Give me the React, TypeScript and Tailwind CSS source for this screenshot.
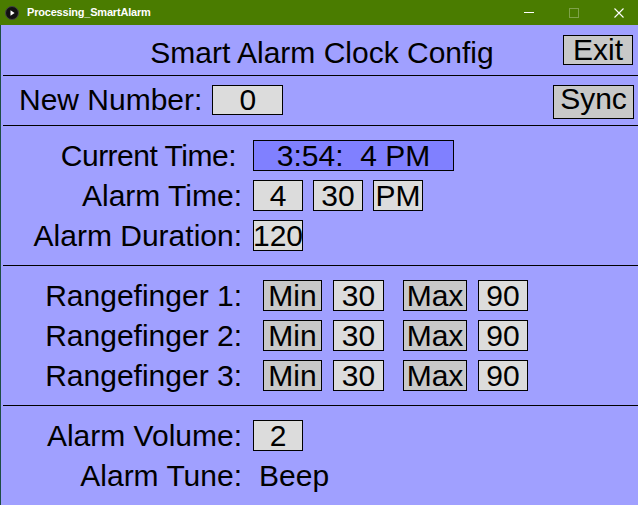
import type { ReactNode } from 'react'

function Cell({ className = '', children }: { className?: string; children: ReactNode }) {
  return (
    <div className={'flex h-[31px] items-center justify-center border border-black leading-none ' + className}>
      {children}
    </div>
  )
}

function Label({ children }: { children: ReactNode }) {
  return <div className="w-[241px] shrink-0 text-right leading-none">{children}</div>
}

function Rule() {
  return <div className="ml-[2px] h-px shrink-0 bg-black" />
}

function Rangefinger({ n }: { n: number }) {
  return (
    <div className="flex h-[31px] items-center">
      <Label>Rangefinger {n}:</Label>
      <Cell className="ml-[21px] w-[59px] bg-[#c8c8c8]">Min</Cell>
      <Cell className="ml-[11px] w-[51px] bg-[#dcdcdc]">30</Cell>
      <Cell className="ml-[19px] w-[64px] bg-[#c8c8c8]">Max</Cell>
      <Cell className="ml-[11px] w-[50px] bg-[#dcdcdc]">90</Cell>
    </div>
  )
}

export default function App() {
  return (
    <div className="flex h-[505px] w-[638px] flex-col overflow-hidden bg-[#a0a0ff] font-['Liberation_Sans',Arial,sans-serif] text-[30px] text-black">
      {/* window title bar */}
      <div className="flex h-[25px] shrink-0 items-center bg-[#4a7c00] text-white">
        <svg width="14" height="14" viewBox="0 0 14 14" className="ml-[5px]">
          <circle cx="7" cy="7" r="6.5" fill="#111" stroke="#444" strokeWidth="1" />
          <path d="M5.5 4.3 L9.6 7 L5.5 9.7 Z" fill="#fff" />
        </svg>
        <span className="ml-[8px] text-[11px] font-bold leading-none tracking-[-0.2px]">Processing_SmartAlarm</span>
        <div className="ml-auto flex items-center gap-[35px] pr-[14px]">
          <div className="h-px w-[10px] bg-white" />
          <div className="h-[10px] w-[10px] border border-[#7fa24a]" />
          <svg width="10" height="10" viewBox="0 0 10 10">
            <path d="M0.5 0.5 L9.5 9.5 M9.5 0.5 L0.5 9.5" stroke="#fff" strokeWidth="1.1" />
          </svg>
        </div>
      </div>

      <div className="flex flex-1 flex-col border-l border-[#1e4d44]">
        {/* header */}
        <div className="grid h-[50px] shrink-0 grid-cols-[1fr_auto_1fr]">
          <div />
          <div className="ml-[5px] pt-[13px] leading-none">Smart Alarm Clock Config</div>
          <div className="flex justify-end pr-[5px] pt-[10px]">
            <div className="flex h-[30px] w-[70px] items-center justify-center border border-black bg-[#c8c8c8] leading-none">Exit</div>
          </div>
        </div>
        <Rule />

        {/* new number / sync */}
        <div className="flex h-[49px] shrink-0 items-start pt-[9px]">
          <div className="flex h-[30px] items-center gap-[10px] pl-[18px]">
            <span className="leading-none">New Number:</span>
            <div className="flex h-[30px] w-[71px] items-center justify-center border border-black bg-[#dcdcdc] leading-none">0</div>
          </div>
          <div className="ml-auto mr-[4px] flex h-[34px] w-[81px] justify-center border border-black bg-[#c8c8c8] leading-[26px]">Sync</div>
        </div>
        <Rule />

        {/* time settings */}
        <div className="flex h-[139px] shrink-0 flex-col gap-[9px] pt-[14px]">
          <div className="flex h-[31px] items-center gap-[11px]">
            <div className="w-[241px] shrink-0 pr-[6px] text-right leading-none tracking-[-0.5px]">Current Time:</div>
            <Cell className="w-[201px] whitespace-pre bg-[#8080ff]">3:54:  4 PM</Cell>
          </div>
          <div className="flex h-[31px] items-center gap-[11px]">
            <Label>Alarm Time:</Label>
            <div className="flex gap-[10px]">
              <Cell className="w-[50px] bg-[#dcdcdc]">4</Cell>
              <Cell className="w-[50px] bg-[#dcdcdc]">30</Cell>
              <Cell className="w-[50px] bg-[#dcdcdc]">PM</Cell>
            </div>
          </div>
          <div className="flex h-[31px] items-center gap-[11px]">
            <Label>Alarm Duration:</Label>
            <Cell className="w-[50px] bg-[#dcdcdc]">120</Cell>
          </div>
        </div>
        <Rule />

        {/* rangefingers */}
        <div className="flex h-[139px] shrink-0 flex-col gap-[9px] pt-[14px]">
          <Rangefinger n={1} />
          <Rangefinger n={2} />
          <Rangefinger n={3} />
        </div>
        <Rule />

        {/* alarm */}
        <div className="flex flex-col gap-[9px] pt-[14px]">
          <div className="flex h-[31px] items-center gap-[11px]">
            <Label>Alarm Volume:</Label>
            <Cell className="w-[50px] bg-[#dcdcdc]">2</Cell>
          </div>
          <div className="flex h-[31px] items-center gap-[11px]">
            <Label>Alarm Tune:</Label>
            <span className="ml-[6px] leading-none">Beep</span>
          </div>
        </div>
      </div>
    </div>
  )
}
